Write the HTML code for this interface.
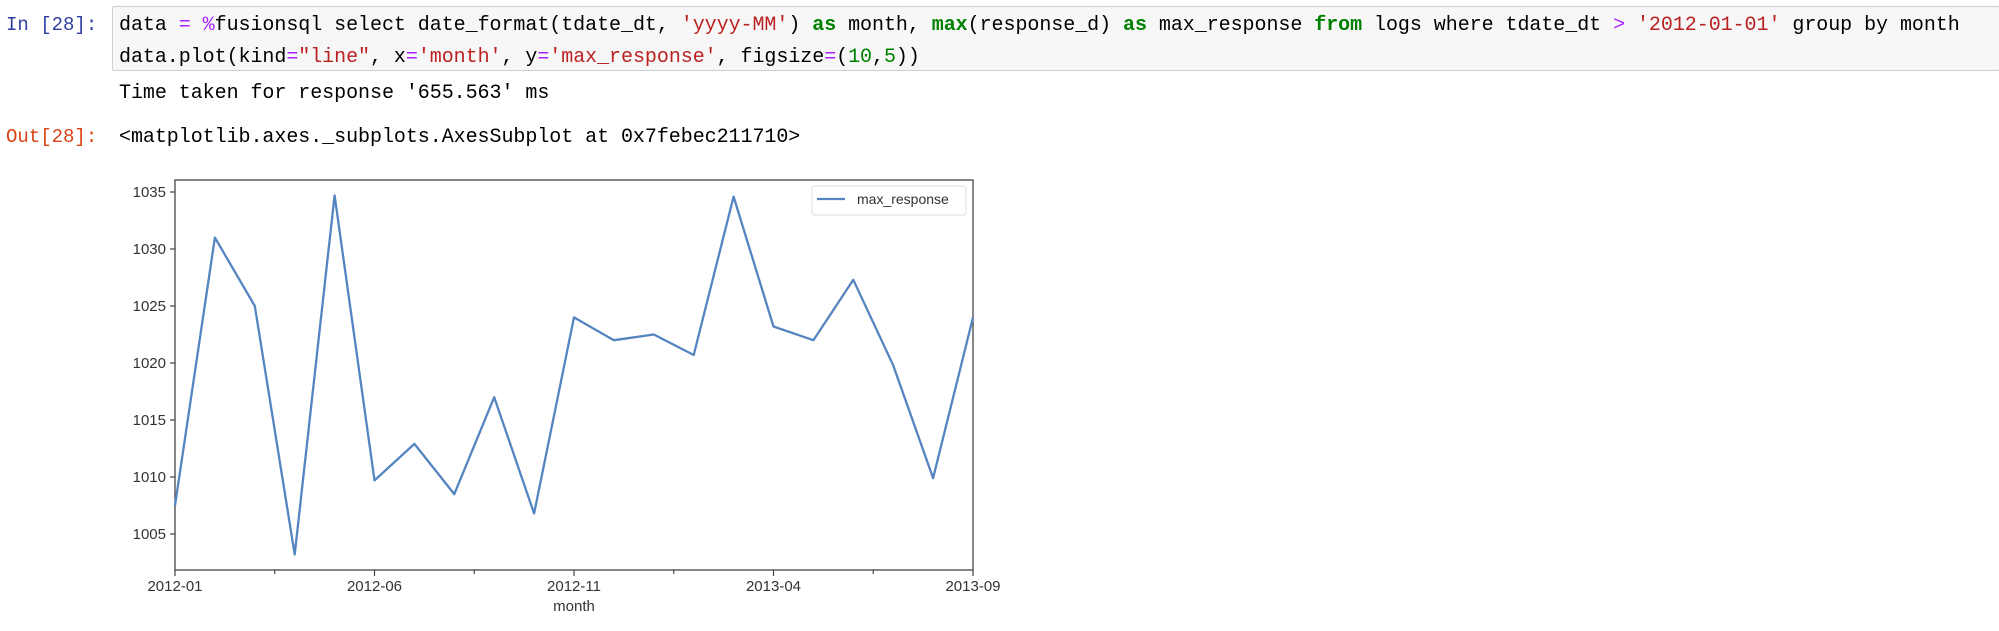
<!DOCTYPE html>
<html><head><meta charset="utf-8"><style>
body{margin:0;width:1999px;height:631px;background:#fff;overflow:hidden;position:relative;font-family:"Liberation Mono",monospace;}
.p{position:absolute;font-size:19px;white-space:pre;}
.box{position:absolute;left:112px;top:6px;width:1886px;height:63px;background:#f7f7f7;border:1px solid #cfcfcf;border-radius:2px;}
.code{position:absolute;left:119px;font-size:20px;white-space:pre;color:#000;letter-spacing:-0.05px}
.k{color:#008000;font-weight:bold}.s{color:#ba2121}.o{color:#aa22ff}.n{color:#008000}
</style></head><body>
<div class="p" style="left:6px;top:14px;color:#303f9f">In [28]:</div>
<div class="box"></div>
<div class="code" style="top:14px">data <span class="o">=</span> <span class="o">%</span>fusionsql select date_format(tdate_dt, <span class="s">'yyyy-MM'</span>) <span class="k">as</span> month, <span class="k">max</span>(response_d) <span class="k">as</span> max_response <span class="k">from</span> logs where tdate_dt <span class="o">&gt;</span> <span class="s">'2012-01-01'</span> group by month</div>
<div class="code" style="top:46px">data.plot(kind<span class="o">=</span><span class="s">"line"</span>, x<span class="o">=</span><span class="s">'month'</span>, y<span class="o">=</span><span class="s">'max_response'</span>, figsize<span class="o">=</span>(<span class="n">10</span>,<span class="n">5</span>))</div>
<div class="code" style="top:82px">Time taken for response '655.563' ms</div>
<div class="p" style="left:6px;top:126px;color:#d84315">Out[28]:</div>
<div class="code" style="top:126px">&lt;matplotlib.axes._subplots.AxesSubplot at 0x7febec211710&gt;</div>
<svg style="position:absolute;left:0;top:0" width="1999" height="631" font-family="'Liberation Sans Narrow','Liberation Sans',sans-serif" font-size="15" fill="#333">
<rect x="175" y="180" width="798" height="390" fill="none" stroke="#444" stroke-width="1.3"/>
<g stroke="#444" stroke-width="1.2">
<line x1="170" x2="175" y1="192" y2="192"/><line x1="170" x2="175" y1="249" y2="249"/><line x1="170" x2="175" y1="306" y2="306"/><line x1="170" x2="175" y1="363" y2="363"/><line x1="170" x2="175" y1="420" y2="420"/><line x1="170" x2="175" y1="477" y2="477"/><line x1="170" x2="175" y1="534" y2="534"/>
<line x1="175" x2="175" y1="570" y2="576"/><line x1="274.75" x2="274.75" y1="570" y2="574"/><line x1="374.5" x2="374.5" y1="570" y2="576"/><line x1="474.25" x2="474.25" y1="570" y2="574"/><line x1="574" x2="574" y1="570" y2="576"/><line x1="673.75" x2="673.75" y1="570" y2="574"/><line x1="773.5" x2="773.5" y1="570" y2="576"/><line x1="873.25" x2="873.25" y1="570" y2="574"/><line x1="973" x2="973" y1="570" y2="576"/>
</g>
<g text-anchor="end"><text x="166" y="197">1035</text><text x="166" y="254">1030</text><text x="166" y="311">1025</text><text x="166" y="368">1020</text><text x="166" y="425">1015</text><text x="166" y="482">1010</text><text x="166" y="539">1005</text></g>
<g text-anchor="middle"><text x="175" y="591">2012-01</text><text x="374.5" y="591">2012-06</text><text x="574" y="591">2012-11</text><text x="773.5" y="591">2013-04</text><text x="973" y="591">2013-09</text><text x="574" y="611">month</text></g>
<polyline fill="none" stroke="#5585c0" stroke-width="2.3" stroke-linejoin="round" points="175,505.5 214.9,237.6 254.8,306 294.7,554.5 334.6,195.4 374.5,480.4 414.4,443.9 454.3,494.1 494.2,397.2 534.1,513.5 574,317.4 613.9,340.2 653.8,334.5 693.7,355 733.6,196.6 773.5,326.5 813.4,340.2 853.3,279.8 893.2,365.3 933.1,478.1 973,317.4"/>
<rect x="812" y="186" width="154" height="29" rx="3" fill="#fff" stroke="#ddd"/>
<line x1="817" x2="845" y1="199" y2="199" stroke="#5585c0" stroke-width="2.3"/>
<text x="857" y="204" font-size="14">max_response</text>
</svg>
</body></html>
